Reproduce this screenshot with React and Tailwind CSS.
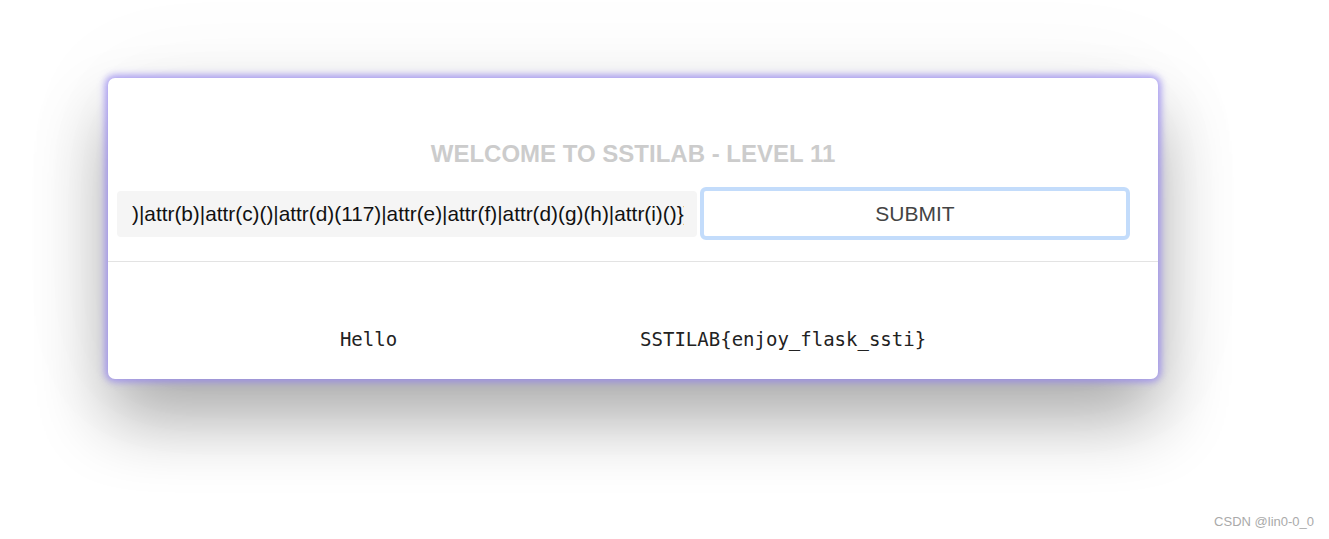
export default function App() {
  const payload = ')|attr(b)|attr(c)()|attr(d)(117)|attr(e)|attr(f)|attr(d)(g)(h)|attr(i)()}}'

  return (
    <div className="relative h-[539px] w-[1329px] overflow-hidden bg-white" style={{ fontFamily: '"Liberation Sans", Arial, sans-serif' }}>
      <div className="pt-[78px] pl-[108px]">
        {/* Card */}
        <div className="flex h-[301px] w-[1050px] flex-col rounded-[7px] bg-white shadow-[0_0_7px_3px_rgba(150,135,240,0.8),0_40px_70px_rgba(0,0,0,0.32),0_0_110px_rgba(0,0,0,0.05)]">
          <h1 className="mt-[62px] text-center text-[24px] leading-[28px] font-bold text-[#cccccc]">
            WELCOME TO SSTILAB - LEVEL 11
          </h1>

          <div className="mt-[19px] flex items-center pl-[9px] pr-[28px]">
            <div className="flex h-[46px] w-[580px] items-center rounded-[4px] bg-[#f5f5f5] pl-[15px] pr-[13px] text-[20.8px] text-[#111]">
              <div className="overflow-hidden whitespace-nowrap">{payload}</div>
            </div>
            <button className="ml-[3px] flex h-[53px] flex-1 items-center justify-center rounded-[6px] border-[4px] border-[#c3dcfb] bg-white text-[21px] text-[#444]">
              SUBMIT
            </button>
          </div>

          <div className="mt-[21px] h-px w-full bg-[#e3e3e3]" />

          {/* Output row */}
          <div className="mt-[65px] flex justify-center gap-[243px] text-[19px] leading-[24px] text-[#222]" style={{ fontFamily: '"DejaVu Sans Mono", "Liberation Mono", monospace' }}>
            <span>Hello</span>
            <span>SSTILAB{'{'}enjoy_flask_ssti{'}'}</span>
          </div>
        </div>
      </div>

      <div className="absolute right-[15px] bottom-[8px] text-[13px] text-[#aaa]">CSDN @lin0-0_0</div>
    </div>
  )
}
